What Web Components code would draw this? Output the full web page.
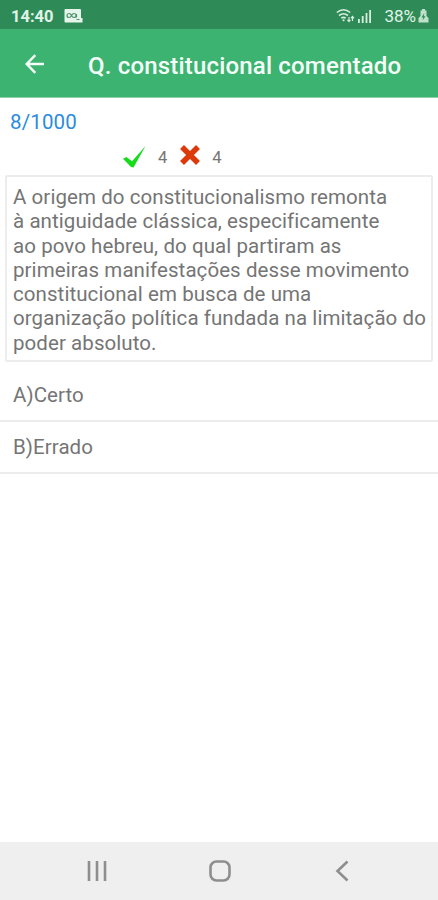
<!DOCTYPE html>
<html lang="pt-BR">
<head>
<meta charset="utf-8">
<title>Q. constitucional comentado</title>
<style>
  body { margin: 0; font-family: Roboto, "Liberation Sans", sans-serif; }
</style>
</head>
<body>
<quiz-screen>
  <status-bar slot="top" time="14:40" battery="38%"></status-bar>
  <app-bar slot="top">Q. constitucional comentado</app-bar>
  <quiz-progress>8/1000</quiz-progress>
  <quiz-score right="4" wrong="4"></quiz-score>
  <quiz-question>A origem do constitucionalismo remonta<br>à antiguidade clássica, especificamente<br>ao povo hebreu, do qual partiram as<br>primeiras manifestações desse movimento<br>constitucional em busca de uma<br>organização política fundada na limitação do<br>poder absoluto.</quiz-question>
  <quiz-option>A)Certo</quiz-option>
  <quiz-option>B)Errado</quiz-option>
  <nav-bar slot="bottom"></nav-bar>
</quiz-screen>

<script>
// every element here only needs a shadow root filled from a string
class BaseElement extends HTMLElement {
  connectedCallback() {
    this.attachShadow({ mode: "open" }).innerHTML = this.render();
  }
}

customElements.define(
  "quiz-screen",
  class extends BaseElement {
    render() {
      return `
        <style>
          :host { display: flex; flex-direction: column; height: 900px; background: #fff; overflow: hidden }
          main { flex: 1 }
        </style>
        <slot name="top"></slot>
        <main><slot></slot></main>
        <slot name="bottom"></slot>`;
    }
  }
);

customElements.define(
  "status-bar",
  class extends BaseElement {
    render() {
      return `
        <style>
          :host { display: flex; align-items: center; box-sizing: border-box; height: 29px; padding: 3px 9px 0 11px; background: #2e8b57; color: #e0f3e7; font-size: 17px }
          svg { display: block }
          .time { width: 53px; font-weight: 700; font-size: 16.5px }
          .wifi { margin-left: auto }
          .signal { margin: 0 12px 0 2px }
          .battery { margin-left: 2px }
        </style>
        <span class="time">${this.getAttribute("time")}</span>
        <svg width="19" height="15" viewBox="0 0 19 15">
          <path d="M1.500 0h14.500q1 0 1 1v8h1.500v4.500H1.500q-1 0-1-1V1q0-1 1-1z" fill="#e6f5eb"/>
          <path d="M5 4.500a2 2 0 1 0 0 4q1.500 0 2.500-2t2.500-2a2 2 0 1 1 0 4q-1.500 0-2.500-2t-2.500-2M12.500 5v3.500M12.500 10.500h3" fill="none" stroke="#4e936b" stroke-width="1.200"/>
        </svg>
        <svg class="wifi" width="20" height="16" viewBox="0 0 20 16" fill="none" stroke="#d5eedd" stroke-width="1.600">
          <path d="M.8 4.500q6.700-5.500 13.400 0M3 7.500q4.500-3.500 9 0M5.300 10.200q2.200-1.600 4.400 0"/>
          <path d="M7.500 12.200h.1" stroke-width="2" stroke-linecap="round"/>
          <path d="M13 9v4.500m-1.600-1.700 1.600 1.700 1.400-1.700M16.500 13V8.500m-1.500 1.700 1.500-1.700 1.500 1.700" stroke-width="1.200"/>
        </svg>
        <svg class="signal" width="14" height="15" viewBox="0 0 14 15" fill="#d5eedd">
          <rect x="0" y="10" width="1.800" height="4"/>
          <rect x="3.800" y="7" width="1.800" height="7"/>
          <rect x="7.600" y="4" width="1.800" height="10"/>
          <rect x="11.200" y="1" width="1.800" height="13"/>
        </svg>
        <span>${this.getAttribute("battery")}</span>
        <svg class="battery" width="11" height="16" viewBox="0 0 11 16">
          <path d="M4 1h3v1.500h1.500V8l2 2v4.500H.5V10l2-2V2.500H4z" fill="#bfe0cb"/>
          <path d="M6.300 5 3.500 9.500h1.800l-.8 3 3-4.300H5.800z" fill="#2e8b57"/>
        </svg>`;
    }
  }
);

customElements.define(
  "app-bar",
  class extends BaseElement {
    render() {
      return `
        <style>
          :host { display: flex; align-items: center; box-sizing: border-box; height: 69px; padding: 5px 0 0 25px; background: #3cb371; color: #f4fff8; border-bottom: 1px solid #8dd2ab }
          svg { display: block; margin-top: -3px }
          h1 { margin: 0 0 0 43px; font-size: 24px; font-weight: 500; letter-spacing: .18px; white-space: nowrap }
        </style>
        <svg width="20" height="20" viewBox="0 0 20 20" fill="none" stroke="#f4fff8" stroke-width="2.400">
          <path d="M19 10H2M10.300 1.200 1.700 10l8.600 8.800"/>
        </svg>
        <h1><slot></slot></h1>`;
    }
  }
);

customElements.define(
  "quiz-progress",
  class extends BaseElement {
    render() {
      return `
        <style>
          :host { display: block; padding: 12px 10px 0; height: 24px; line-height: 24px; font-size: 20.500px; letter-spacing: .15px; color: #2b8bdd }
        </style>
        <slot></slot>`;
    }
  }
);

customElements.define(
  "quiz-score",
  class extends BaseElement {
    render() {
      return `
        <style>
          :host { display: flex; align-items: center; box-sizing: border-box; height: 41px; padding: 4px 0 0 123px; font-size: 16.500px; color: #757575 }
          svg { display: block }
          .right { width: 35px }
          .wrong { width: 33px; margin-left: 12px; margin-top: -3px }
          span { padding-top: 1px }
        </style>
        <svg class="right" height="24" viewBox="0 0 35 24">
          <path d="M0 13.800 3.500 12l5.500 4.300L22.500 1 10.500 22.500 8 22z" fill="#16dc1c"/>
        </svg>
        <span>${this.getAttribute("right")}</span>
        <svg class="wrong" height="22" viewBox="0 0 33 22">
          <path d="m3 3 16 16M19 3 3 19" stroke="#dc3a0c" stroke-width="5.500"/>
        </svg>
        <span>${this.getAttribute("wrong")}</span>`;
    }
  }
);

customElements.define(
  "quiz-question",
  class extends BaseElement {
    render() {
      return `
        <style>
          :host { display: block; box-sizing: border-box; height: 187px; margin: 0 5px; padding: 8px 0 0 6px; border: 2px solid #ececec; border-radius: 2px; font-size: 20.500px; line-height: 24.300px; letter-spacing: .07px; color: #757575; white-space: nowrap }
        </style>
        <slot></slot>`;
    }
  }
);

customElements.define(
  "quiz-option",
  class extends BaseElement {
    render() {
      return `
        <style>
          :host { display: flex; align-items: center; box-sizing: border-box; height: 52px; padding-left: 13px; border-bottom: 2px solid #ececec; font-size: 20.500px; letter-spacing: .07px; color: #757575 }
          :host(:first-of-type) { height: 60px; padding-top: 8px }
        </style>
        <slot></slot>`;
    }
  }
);

customElements.define(
  "nav-bar",
  class extends BaseElement {
    render() {
      return `
        <style>
          :host { display: flex; align-items: center; justify-content: space-between; box-sizing: border-box; height: 58px; padding: 0 84px 0 85px; background: #efefef }
          svg { display: block; fill: none; stroke: #8e8e8e; stroke-width: 2.600 }
        </style>
        <svg width="24" height="24" viewBox="0 0 24 24"><path d="M4 2v20M12 2v20M20 2v20"/></svg>
        <svg width="24" height="24" viewBox="0 0 24 24"><rect x="2.500" y="2.500" width="19" height="19" rx="6"/></svg>
        <svg width="24" height="24" viewBox="0 0 24 24"><path d="M17.500 2.500 7.500 12l10 9.500"/></svg>`;
    }
  }
);
</script>
</body>
</html>
